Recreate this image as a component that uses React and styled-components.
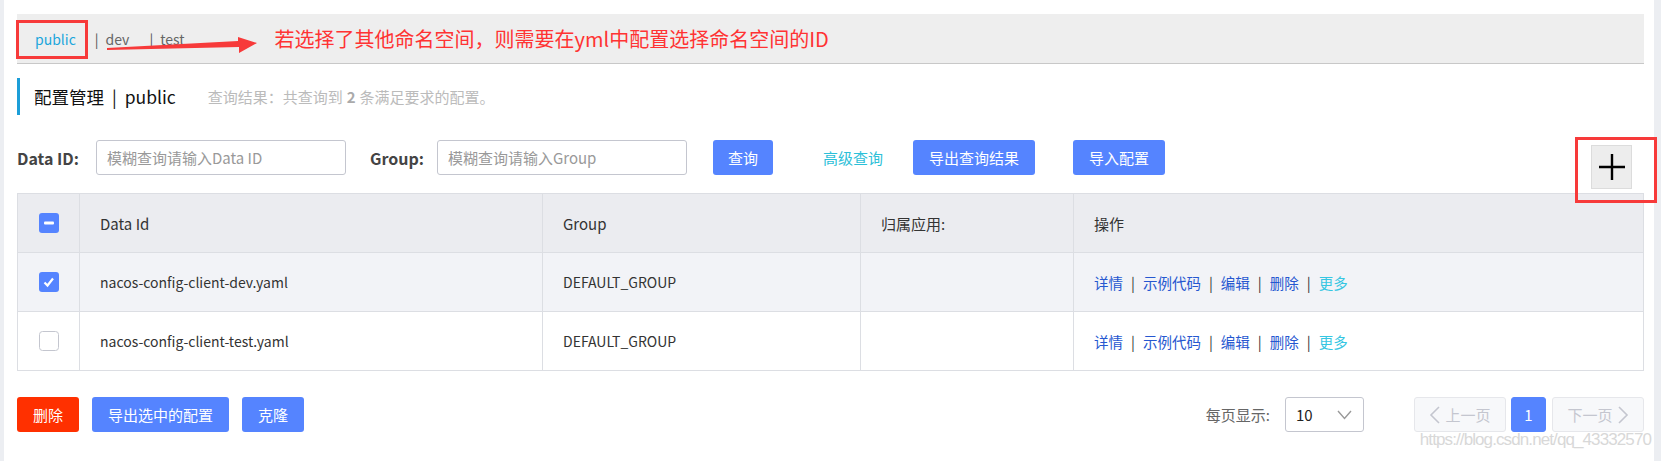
import React from "react";
import styled, { createGlobalStyle } from "styled-components";

const GlobalStyle = createGlobalStyle`
  html, body {
    margin: 0;
    padding: 0;
    background: #ffffff;
    font-family: "Noto Sans CJK SC", "Noto Sans", sans-serif;
    color: #333;
  }
  * {
    box-sizing: border-box;
  }
`;

const Page = styled.div`
  display: flex;
  width: 1661px;
  height: 461px;
  overflow: hidden;
  background: #eceef2;
`;

const Main = styled.div`
  position: relative;
  flex: 1;
  margin: 0 7px 0 4px;
  padding: 14px 10px 0 13px;
  background: #ffffff;
`;

const NamespaceBar = styled.div`
  position: relative;
  display: flex;
  align-items: center;
  height: 50px;
  padding-left: 18px;
  background: #eeeeee;
  border-bottom: 1px solid #c8c8c8;
  font-size: 14px;
`;

const NamespaceTab = styled.span`
  position: relative;
  color: ${(p) => (p.$active ? "#1aa6dc" : "#666")};
  margin-right: ${(p) => (p.$active ? "19px" : "20px")};

  &::after {
    content: "";
    display: ${(p) => (p.$marked ? "block" : "none")};
    position: absolute;
    left: -19px;
    top: -9px;
    width: 66px;
    height: 33px;
    border: 3px solid #f73a3a;
  }
`;

const TabSep = styled.span`
  margin-right: 7px;
  color: #555;
`;

const ArrowSvg = styled.svg`
  position: absolute;
  left: 88px;
  top: 20px;
`;

const Annotation = styled.span`
  margin-left: 70px;
  color: #ff3333;
  font-size: 20px;
`;

const TitleBlock = styled.div`
  display: flex;
  align-items: center;
  height: 37px;
  margin-top: 14px;
  padding-left: 14px;
  border-left: 3px solid #1c9ed8;
`;

const Title = styled.span`
  font-size: 17.5px;
  color: #111;
`;

const TitleSep = styled.span`
  margin: 0 8px;
`;

const Summary = styled.span`
  margin-left: 32px;
  font-size: 15px;
  color: #bbbbbb;

  b {
    color: #aaa;
    margin: 0 4px;
  }
`;

const Toolbar = styled.div`
  display: flex;
  align-items: flex-start;
  margin-top: 25px;
`;

const FieldLabel = styled.label`
  display: flex;
  align-items: center;
  height: 35px;
  font-size: 16px;
  font-weight: 700;
  color: #444;
  margin-left: ${(p) => p.$gap || 0}px;
  margin-right: ${(p) => p.$after}px;
`;

const TextInput = styled.input`
  width: 250px;
  height: 35px;
  padding: 0 10px;
  border: 1px solid #c4c6cf;
  border-radius: 3px;
  font-family: inherit;
  font-size: 15px;
  color: #333;
  outline: none;

  &::placeholder {
    color: #999;
  }
`;

const Button = styled.button`
  height: 35px;
  padding: 0 ${(p) => p.$pad || 16}px;
  margin-left: ${(p) => p.$gap || 0}px;
  border: none;
  border-radius: 3px;
  background: ${(p) => (p.$danger ? "#ff3000" : "#5584ff")};
  color: #fff;
  font-family: inherit;
  font-size: 15px;
  cursor: pointer;
`;

const TextLink = styled.span`
  display: flex;
  align-items: center;
  height: 35px;
  margin-left: 50px;
  color: #2cc0d8;
  font-size: 15px;
`;

const AddWrap = styled.div`
  position: relative;
  margin: 5px 12px 0 auto;

  &::after {
    content: "";
    position: absolute;
    left: -16px;
    top: -8px;
    width: 76px;
    height: 60px;
    border: 3px solid #f73a3a;
  }
`;

const AddButton = styled.div`
  display: flex;
  align-items: center;
  justify-content: center;
  width: 41px;
  height: 44px;
  background: #ededed;
  border: 1px solid #dcdcdc;
`;

const Table = styled.table`
  width: 100%;
  margin-top: 4px;
  border-collapse: collapse;
  table-layout: fixed;
  font-size: 14px;
  color: #333;
`;

const Row = styled.tr`
  height: 59px;
  background: ${(p) => p.$bg || "#fff"};
`;

const Cell = styled.td`
  padding: 0 0 0 20px;
  border: 1px solid #dcdee3;
  text-align: left;
  font-weight: 400;
  font-size: ${(p) => (p.as === "th" ? "15px" : "14px")};
  white-space: nowrap;
`;

const CheckCell = styled(Cell)`
  padding: 0;
  text-align: center;

  svg {
    display: block;
    margin: 0 auto;
  }
`;

const Actions = styled.div`
  display: flex;
  align-items: center;
  font-size: 14.5px;
`;

const ActionLink = styled.span`
  color: ${(p) => (p.$more ? "#36c6e2" : "#2657d0")};
`;

const ActionSep = styled.span`
  margin: 0 8px;
  color: #333;
`;

const Footer = styled.div`
  display: flex;
  align-items: center;
  margin-top: 26px;
`;

const Pager = styled.div`
  display: flex;
  align-items: center;
  margin-left: auto;
`;

const PagerLabel = styled.span`
  font-size: 15px;
  color: #666;
  margin-right: 15px;
`;

const Select = styled.div`
  display: flex;
  align-items: center;
  justify-content: space-between;
  width: 79px;
  height: 35px;
  padding: 0 11px 0 10px;
  border: 1px solid #c4c6cf;
  border-radius: 3px;
  font-size: 15px;
  color: #222;
`;

const PageButton = styled.div`
  display: flex;
  align-items: center;
  justify-content: center;
  gap: 4px;
  width: ${(p) => p.$w}px;
  height: 35px;
  margin-left: ${(p) => p.$gap || 0}px;
  border: 1px solid ${(p) => (p.$current ? "#5584ff" : "#e6e7eb")};
  border-radius: 3px;
  background: ${(p) => (p.$current ? "#5584ff" : "#f7f8fa")};
  color: ${(p) => (p.$current ? "#fff" : "#c4c6cf")};
  font-size: 15px;
`;

const Watermark = styled.div`
  position: absolute;
  right: 3px;
  top: 430px;
  font-family: "Liberation Sans", sans-serif;
  font-size: 17px;
  letter-spacing: -0.9px;
  color: #d8d8d8;
`;

const Checkbox = ({ state }) => {
  if (state === "none") {
    return (
      <svg width="20" height="20" viewBox="0 0 20 20">
        <rect x="0.5" y="0.5" width="19" height="19" rx="3" fill="#fff" stroke="#c4c6cf" />
      </svg>
    );
  }
  return (
    <svg width="20" height="20" viewBox="0 0 20 20">
      <rect width="20" height="20" rx="3" fill="#5584ff" />
      {state === "half" ? (
        <rect x="5" y="8.5" width="10" height="3" rx="1" fill="#fff" />
      ) : (
        <path d="M5.5 10.5 L8.5 13.5 L14 6.5" fill="none" stroke="#fff" strokeWidth="2.2" />
      )}
    </svg>
  );
};

const Chevron = ({ dir }) => (
  <svg width="12" height="20" viewBox="0 0 12 20">
    <path
      d={dir === "left" ? "M10 2 L2 10 L10 18" : "M2 2 L10 10 L2 18"}
      fill="none"
      stroke="#c4c6cf"
      strokeWidth="1.6"
    />
  </svg>
);

const rows = [
  { id: "nacos-config-client-dev.yaml", group: "DEFAULT_GROUP", checked: true },
  { id: "nacos-config-client-test.yaml", group: "DEFAULT_GROUP", checked: false },
];

const actionNames = ["详情", "示例代码", "编辑", "删除"];

const App = () => {
  return (
    <>
      <GlobalStyle />
      <Page>
        <Main>
          <NamespaceBar>
            <NamespaceTab $active $marked>
              public
            </NamespaceTab>
            <NamespaceTab>
              <TabSep>|</TabSep>dev
            </NamespaceTab>
            <NamespaceTab>
              <TabSep>|</TabSep>test
            </NamespaceTab>
            <ArrowSvg width="160" height="24" viewBox="0 0 160 24">
              <polygon points="2,14 133,7 133,3 152,9 134,19 134,13 2,16" fill="#f73a3a" />
            </ArrowSvg>
            <Annotation>若选择了其他命名空间，则需要在yml中配置选择命名空间的ID</Annotation>
          </NamespaceBar>

          <TitleBlock>
            <Title>
              配置管理<TitleSep>|</TitleSep>public
            </Title>
            <Summary>
              查询结果：共查询到<b>2</b>条满足要求的配置。
            </Summary>
          </TitleBlock>

          <Toolbar>
            <FieldLabel $after={17}>Data ID:</FieldLabel>
            <TextInput placeholder="模糊查询请输入Data ID" />
            <FieldLabel $gap={24} $after={13}>
              Group:
            </FieldLabel>
            <TextInput placeholder="模糊查询请输入Group" />
            <Button $gap={26} $pad={15}>
              查询
            </Button>
            <TextLink>高级查询</TextLink>
            <Button $gap={30}>导出查询结果</Button>
            <Button $gap={38}>导入配置</Button>
            <AddWrap>
              <AddButton>
                <svg width="26" height="26" viewBox="0 0 26 26">
                  <path d="M13 0 V26 M0 13 H26" stroke="#000" strokeWidth="2.4" />
                </svg>
              </AddButton>
            </AddWrap>
          </Toolbar>

          <Table>
            <colgroup>
              <col style={{ width: 62 }} />
              <col style={{ width: 463 }} />
              <col style={{ width: 318 }} />
              <col style={{ width: 213 }} />
              <col />
            </colgroup>
            <thead>
              <Row $bg="#ebecf0">
                <CheckCell as="th">
                  <Checkbox state="half" />
                </CheckCell>
                <Cell as="th">Data Id</Cell>
                <Cell as="th">Group</Cell>
                <Cell as="th">归属应用:</Cell>
                <Cell as="th">操作</Cell>
              </Row>
            </thead>
            <tbody>
              {rows.map((r) => (
                <Row key={r.id} $bg={r.checked ? "#f2f3f7" : "#fff"}>
                  <CheckCell>
                    <Checkbox state={r.checked ? "on" : "none"} />
                  </CheckCell>
                  <Cell>{r.id}</Cell>
                  <Cell>{r.group}</Cell>
                  <Cell />
                  <Cell>
                    <Actions>
                      {actionNames.map((a) => (
                        <React.Fragment key={a}>
                          <ActionLink>{a}</ActionLink>
                          <ActionSep>|</ActionSep>
                        </React.Fragment>
                      ))}
                      <ActionLink $more>更多</ActionLink>
                    </Actions>
                  </Cell>
                </Row>
              ))}
            </tbody>
          </Table>

          <Footer>
            <Button $danger>删除</Button>
            <Button $gap={13}>导出选中的配置</Button>
            <Button $gap={13}>克隆</Button>
            <Pager>
              <PagerLabel>每页显示:</PagerLabel>
              <Select>
                <span>10</span>
                <svg width="15" height="10" viewBox="0 0 15 10">
                  <path d="M1 1 L7.5 8.5 L14 1" fill="none" stroke="#999" strokeWidth="1.4" />
                </svg>
              </Select>
              <PageButton $w={92} $gap={50}>
                <Chevron dir="left" />
                上一页
              </PageButton>
              <PageButton $w={35} $gap={5} $current>
                1
              </PageButton>
              <PageButton $w={92} $gap={6}>
                下一页
                <Chevron dir="right" />
              </PageButton>
            </Pager>
          </Footer>
          <Watermark>https://blog.csdn.net/qq_43332570</Watermark>
        </Main>
      </Page>
    </>
  );
};

export default App;
